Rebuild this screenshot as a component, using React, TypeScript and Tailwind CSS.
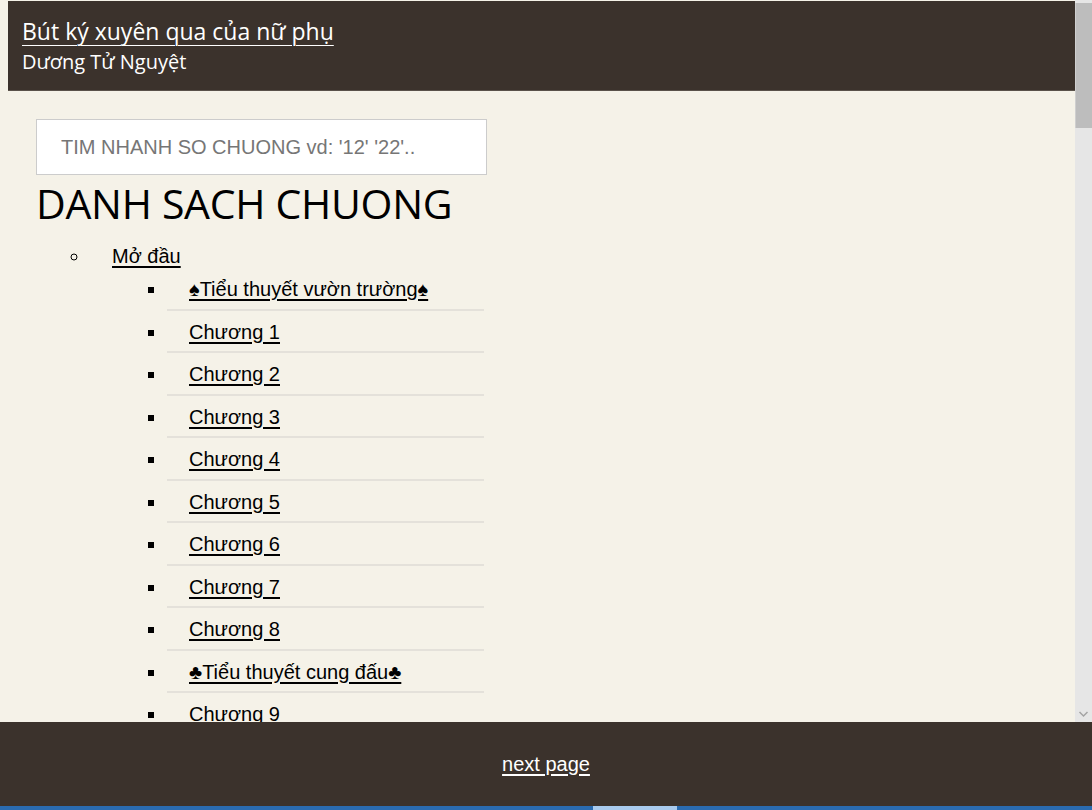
import React from 'react';

type Item = { title: string; section?: boolean };

const items: Item[] = [
  { title: '♠Tiểu thuyết vườn trường♠', section: true },
  ...Array.from({ length: 8 }, (_, i) => ({ title: `Chương ${i + 1}` })),
  { title: '♣Tiểu thuyết cung đấu♣', section: true },
  { title: 'Chương 9' },
];

export default function App() {
  return (
    <div className="h-screen flex flex-col bg-[#f5f2e8] overflow-hidden">
      <div className="flex-1 min-h-0 flex">
        {/* page content */}
        <div className="flex-1 overflow-hidden">
          <header className="mt-px ml-2 h-[90px] bg-[#3b322c] border-b border-[#5a524a] pl-[14px] pt-[13px] font-['Open_Sans','Noto_Sans',sans-serif] text-white">
            <a href="#" className="block w-fit text-[23px] leading-[34px] underline underline-offset-[5px] decoration-1">
              Bút ký xuyên qua của nữ phụ
            </a>
            <div className="text-[20px] leading-[28px]">Dương Tử Nguyệt</div>
          </header>

          <main className="ml-[36px] w-[451px] pt-[28px]">
            <input
              type="text"
              placeholder="TIM NHANH SO CHUONG vd: '12' '22'.."
              className="w-full h-[56px] bg-white border border-[#cccccc] pl-[24px] text-[20px] font-['Liberation_Sans',Arial,sans-serif] placeholder:text-[#767676] outline-none"
            />
            <h1 className="text-[41px] leading-[56px] font-['Open_Sans','Noto_Sans',sans-serif] text-black tracking-[-0.3px]">
              DANH SACH CHUONG
            </h1>

            <ul className="mt-[10px] pl-[54px] list-[circle] text-black font-['Liberation_Sans',Arial,sans-serif] text-[20px]">
              <li className="pl-[22px]">
                <a href="#" className="underline underline-offset-[3px]">
                  Mở đầu
                </a>
                <ul className="pl-[55px] list-[square] -mt-[3px]">
                  {items.map((it, i) => (
                    <li
                      key={i}
                      className="pl-[22px] w-[317px] h-[42.5px] pt-[10px] border-b-2 border-[#e4e1da] leading-[22px]"
                    >
                      <a href="#" className="underline underline-offset-[3px]">
                        {it.title}
                      </a>
                    </li>
                  ))}
                </ul>
              </li>
            </ul>
          </main>
        </div>

        {/* scrollbar */}
        <div className="w-[17px] shrink-0 bg-[#e6e6e6] flex flex-col pt-[3px] pb-[4px]">
          <div className="h-[125px] bg-[#bdbdbd] border-l border-[#cfcfcf]" />
          <div className="flex-1" />
          <svg width="17" height="8" viewBox="0 0 17 8" className="shrink-0">
            <polyline points="4.5,2 8.5,6 12.5,2" fill="none" stroke="#a3a3a3" strokeWidth="1.5" />
          </svg>
        </div>
      </div>

      <footer className="h-[84px] shrink-0 bg-[#3b322c] flex items-center justify-center">
        <a href="#" className="text-white text-[20px] font-['Liberation_Sans',Arial,sans-serif] underline underline-offset-[3px]">
          next page
        </a>
      </footer>
      <div className="h-[4px] shrink-0 bg-[#2a6bb0] flex">
        <div className="ml-[593px] w-[84px] bg-[#a9cbee]" />
      </div>
    </div>
  );
}
